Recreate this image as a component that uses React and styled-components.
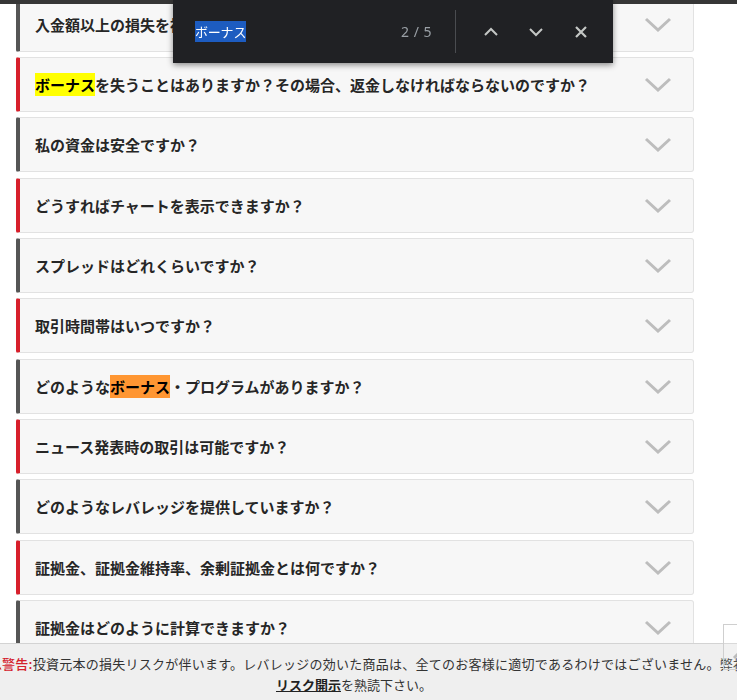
import styled, { createGlobalStyle } from "styled-components";

const GlobalStyle = createGlobalStyle`
  html, body {
    margin: 0;
    padding: 0;
    background: #ffffff;
    overflow: hidden;
  }
  body {
    font-family: "Noto Sans CJK JP", "Noto Sans", sans-serif;
  }
`;

const questions = [
  { text: "入金額以上の損失を被ることはありますか？", accent: "gray" },
  { text: "を失うことはありますか？その場合、返金しなければならないのですか？", accent: "red", mark: "ボーナス" },
  { text: "私の資金は安全ですか？", accent: "gray" },
  { text: "どうすればチャートを表示できますか？", accent: "red" },
  { text: "スプレッドはどれくらいですか？", accent: "gray" },
  { text: "取引時間帯はいつですか？", accent: "red" },
  { before: "どのような", mark: "ボーナス", text: "・プログラムがありますか？", accent: "gray", current: true },
  { text: "ニュース発表時の取引は可能ですか？", accent: "red" },
  { text: "どのようなレバレッジを提供していますか？", accent: "gray" },
  { text: "証拠金、証拠金維持率、余剰証拠金とは何ですか？", accent: "red" },
  { text: "証拠金はどのように計算できますか？", accent: "gray" },
];

const TopStrip = styled.div`
  position: fixed;
  top: 0;
  left: 0;
  right: 0;
  height: 4px;
  background: #363636;
  z-index: 5;
`;

const FaqList = styled.div`
  margin-top: -3.33px;
  padding: 0 43px 0 16px;
  display: flex;
  flex-direction: column;
  gap: 5.33px;
`;

const FaqItem = styled.div`
  box-sizing: border-box;
  height: 55px;
  display: flex;
  align-items: center;
  justify-content: space-between;
  padding: 0 21px 0 15px;
  background: #f7f7f7;
  border: 1px solid #e2e2e2;
  border-left: 4px solid ${(p) => (p.$accent === "red" ? "#d71f2b" : "#555555")};
  border-radius: 2px 3px 3px 2px;
`;

const Question = styled.span`
  font-size: 15px;
  font-weight: 700;
  color: #262626;
  white-space: nowrap;
`;

const Match = styled.mark`
  background: ${(p) => (p.$current ? "#ff9632" : "#ffff00")};
  color: #000;
  padding: 1px 0;
`;

const Chevron = styled.svg`
  width: 28px;
  height: 15px;
  flex-shrink: 0;
`;

const FindBar = styled.div`
  position: fixed;
  top: 0;
  left: 173px;
  width: 440px;
  height: 63px;
  box-sizing: border-box;
  background: #202124;
  box-shadow: 0 2px 6px rgba(0, 0, 0, 0.45);
  display: flex;
  align-items: center;
  padding: 0 10px 0 22px;
  z-index: 10;
`;

const Query = styled.div`
  flex: 1;
  font-size: 13px;
  color: #ffffff;
`;

const Selected = styled.span`
  background: #1d5cc0;
  display: inline-block;
  line-height: 21px;
  letter-spacing: -0.2px;
`;

const Count = styled.span`
  font-family: "Noto Sans", sans-serif;
  font-size: 14px;
  color: #9aa0a6;
  margin-right: 23px;
  letter-spacing: 0.5px;
`;

const Divider = styled.div`
  width: 1px;
  height: 43px;
  background: #4a4c50;
  margin-right: 12px;
`;

const IconButton = styled.div`
  width: 45px;
  height: 45px;
  display: flex;
  align-items: center;
  justify-content: center;
`;

const NoticeBar = styled.div`
  position: fixed;
  left: 0;
  right: 0;
  bottom: 0;
  height: 57px;
  box-sizing: border-box;
  padding-top: 8.5px;
  background: #efefef;
  border-top: 1px solid #d3d3d3;
  overflow: hidden;
  font-size: 13px;
  color: #333333;
  line-height: 21px;
  z-index: 4;
`;

const NoticeLine = styled.div`
  white-space: nowrap;
  margin-left: -12px;
  letter-spacing: 0.25px;
`;

const WarnIcon = styled.svg`
  width: 14px;
  height: 13px;
  vertical-align: -1px;
`;

const Warn = styled.span`
  color: #d4202c;
  font-weight: 500;
`;

const NoticeLine2 = styled.div`
  text-align: center;
  padding-right: 29px;
  white-space: nowrap;
`;

const RiskLink = styled.span`
  font-weight: 700;
  color: #222;
  text-decoration: underline;
`;

const ToTop = styled.div`
  position: fixed;
  left: 723px;
  bottom: 30px;
  width: 44px;
  height: 46px;
  box-sizing: border-box;
  border: 1px solid #cfcfcf;
  background: rgba(255, 255, 255, 0.15);
  z-index: 6;
`;

const ChevronDown = () => (
  <Chevron viewBox="0 0 28 15">
    <polyline points="2,2 14,13 26,2" fill="none" stroke="#bdbdbd" strokeWidth="3" />
  </Chevron>
);

export default function App() {
  return (
    <>
      <GlobalStyle />
      <TopStrip />
      <FaqList>
        {questions.map((q, i) => (
          <FaqItem key={i} $accent={q.accent}>
            <Question>
              {q.before}
              {q.mark && <Match $current={q.current}>{q.mark}</Match>}
              {q.text}
            </Question>
            <ChevronDown />
          </FaqItem>
        ))}
      </FaqList>

      <FindBar>
        <Query>
          <Selected>ボーナス</Selected>
        </Query>
        <Count>2 / 5</Count>
        <Divider />
        <IconButton>
          <svg width="16" height="10" viewBox="0 0 16 10">
            <polyline points="2,8 8,2 14,8" fill="none" stroke="#c4c7c5" strokeWidth="2" />
          </svg>
        </IconButton>
        <IconButton>
          <svg width="16" height="10" viewBox="0 0 16 10">
            <polyline points="2,2 8,8 14,2" fill="none" stroke="#c4c7c5" strokeWidth="2" />
          </svg>
        </IconButton>
        <IconButton>
          <svg width="14" height="14" viewBox="0 0 14 14">
            <path d="M2 2 L12 12 M12 2 L2 12" stroke="#c4c7c5" strokeWidth="2.2" />
          </svg>
        </IconButton>
      </FindBar>

      <NoticeBar>
        <NoticeLine>
          <WarnIcon viewBox="0 0 14 13">
            <path d="M7 0.5 L13.5 12.5 L0.5 12.5 Z" fill="#d4202c" />
            <rect x="6.2" y="4" width="1.6" height="5" fill="#fff" />
            <rect x="6.2" y="10" width="1.6" height="1.6" fill="#fff" />
          </WarnIcon>
          <Warn>警告:</Warn>
          投資元本の損失リスクが伴います。レバレッジの効いた商品は、全てのお客様に適切であるわけではございません。弊社の取引条件をよくご確認下さい。
        </NoticeLine>
        <NoticeLine2>
          <RiskLink>リスク開示</RiskLink>を熟読下さい。
        </NoticeLine2>
      </NoticeBar>

      <ToTop>
        <svg width="44" height="44" viewBox="0 0 44 44">
          <polyline points="10,33 22,21 34,33" fill="none" stroke="#bbbbbb" strokeWidth="3" />
        </svg>
      </ToTop>
    </>
  );
}
